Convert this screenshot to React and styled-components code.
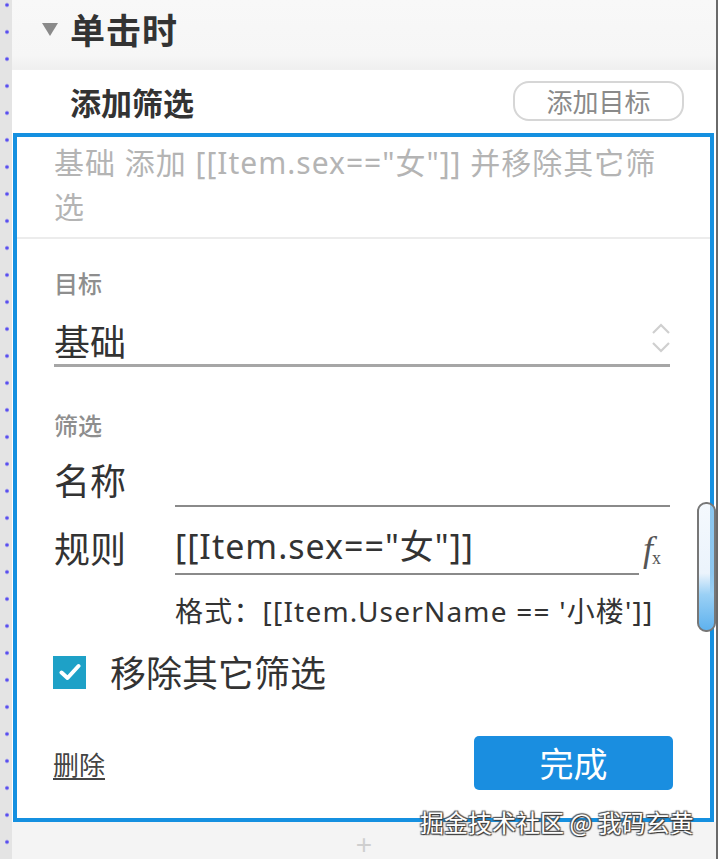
import React from "react";
import styled, { createGlobalStyle } from "styled-components";

const GlobalStyle = createGlobalStyle`
  html, body {
    margin: 0;
    padding: 0;
    background: #fff;
  }
  body {
    font-family: "Noto Sans", "Noto Sans CJK SC", sans-serif;
  }
`;

function Chevrons() {
  return (
    <svg width="22" height="36" viewBox="0 0 22 36" fill="none">
      <path d="M3 13 L11 5 L19 13" stroke="#cfcfcf" strokeWidth="2.2" />
      <path d="M3 23 L11 31 L19 23" stroke="#cfcfcf" strokeWidth="2.2" />
    </svg>
  );
}

function CheckMark() {
  return (
    <svg width="22" height="18" viewBox="0 0 22 18" fill="none">
      <path d="M2.5 9.5 L8.5 15 L19.5 3" stroke="#fff" strokeWidth="4" strokeLinecap="round" strokeLinejoin="round" />
    </svg>
  );
}

export default function App() {
  return (
    <>
      <GlobalStyle />
      <Page>
        <Strip />
        <Panel>
          <Header>
            <Caret />
            <HeaderTitle>单击时</HeaderTitle>
          </Header>
          <ActionRow>
            <ActionTitle>添加筛选</ActionTitle>
            <GhostButton>添加目标</GhostButton>
          </ActionRow>
          <FilterCard>
            <Summary>基础 添加 [[Item.sex=="女"]] 并移除其它筛选</Summary>
            <Form>
              <FieldLabel>目标</FieldLabel>
              <SelectBox>
                <span>基础</span>
                <Chevrons />
              </SelectBox>
              <FieldLabel $gap={43}>筛选</FieldLabel>
              <FieldRow $gap={15}>
                <RowLabel>名称</RowLabel>
                <TextInput />
              </FieldRow>
              <FieldRow $gap={16}>
                <RowLabel>规则</RowLabel>
                <TextInput>[[Item.sex=="女"]]</TextInput>
                <Fx>
                  <i>f</i>
                  <sub>x</sub>
                </Fx>
              </FieldRow>
              <Hint>格式：[[Item.UserName == '小楼']]</Hint>
              <CheckRow>
                <CheckBox>
                  <CheckMark />
                </CheckBox>
                <CheckText>移除其它筛选</CheckText>
              </CheckRow>
              <Footer>
                <DeleteLink>删除</DeleteLink>
                <PrimaryButton>完成</PrimaryButton>
              </Footer>
            </Form>
          </FilterCard>
          <AddBar>+</AddBar>
        </Panel>
        <ScrollThumb />
        <Watermark>掘金技术社区 @ 我码玄黄</Watermark>
      </Page>
    </>
  );
}

const Page = styled.div`
  position: relative;
  display: flex;
  width: 720px;
  height: 859px;
  overflow: hidden;
  background: #fff;
`;

const Strip = styled.div`
  width: 12px;
  flex-shrink: 0;
  background-color: #e4e4e4;
  background-image: radial-gradient(circle, #5a4ff0 1.4px, transparent 2.2px);
  background-size: 12px 27px;
  background-position: 1px -8.5px;
`;

const Panel = styled.div`
  width: 704px;
  display: flex;
  flex-direction: column;
  border-right: 2px solid #6a6a6a;
`;

const Header = styled.div`
  flex-shrink: 0;
  height: 69px;
  display: flex;
  align-items: center;
  padding-left: 30px;
  background: linear-gradient(to bottom, #f8f8f8 0%, #f6f6f6 80%, #efefef 100%);
  border-bottom: 1px solid #f0f0f0;
`;

const Caret = styled.div`
  width: 0;
  height: 0;
  border-left: 8px solid transparent;
  border-right: 8px solid transparent;
  border-top: 13px solid #8a8a8a;
  margin: -10px 12px 0 0;
`;

const HeaderTitle = styled.div`
  font-family: "Noto Sans CJK SC", sans-serif;
  font-size: 35px;
  font-weight: 700;
  color: #333;
  letter-spacing: 1px;
  margin-top: -12px;
`;

const ActionRow = styled.div`
  flex-shrink: 0;
  height: 63px;
  display: flex;
  align-items: center;
  justify-content: space-between;
  padding: 0 32px 0 58px;
`;

const ActionTitle = styled.div`
  font-family: "Noto Sans CJK SC", sans-serif;
  font-size: 31px;
  font-weight: 700;
  color: #333;
`;

const GhostButton = styled.button`
  width: 171px;
  height: 40px;
  border: 2px solid #d6d6d6;
  border-radius: 16px;
  background: #fff;
  color: #8a8a8a;
  font-family: "Noto Sans CJK SC", sans-serif;
  font-size: 26px;
  line-height: 1;
  padding: 0;
  margin-top: -2px;
`;

const FilterCard = styled.div`
  flex-shrink: 0;
  margin: 0 2px 0 1px;
  border: 4px solid #1590e0;
  background: #fff;
`;

const Summary = styled.div`
  padding: 4px 40px 8px 37px;
  font-family: "Noto Sans", "Noto Sans CJK SC", sans-serif;
  font-size: 30px;
  letter-spacing: 1px;
  line-height: 44px;
  color: #b4b4b4;
  border-bottom: 2px solid #ececec;
`;

const Form = styled.div`
  display: flex;
  flex-direction: column;
  padding: 0 40px 28px 37px;
`;

const FieldLabel = styled.div`
  margin-top: ${(p) => p.$gap ?? 29}px;
  font-family: "Noto Sans CJK SC", sans-serif;
  font-size: 24px;
  line-height: 30px;
  font-weight: 500;
  color: #8e8e8e;
`;

const SelectBox = styled.div`
  margin-top: 18px;
  height: 48px;
  display: flex;
  align-items: center;
  justify-content: space-between;
  border-bottom: 3px solid #a6a6a6;
  font-family: "Noto Sans CJK SC", sans-serif;
  font-size: 36px;
  color: #333;

  svg {
    margin-right: -2px;
    margin-top: -4px;
  }
`;

const FieldRow = styled.div`
  margin-top: ${(p) => p.$gap}px;
  height: 52px;
  display: flex;
  align-items: center;
`;

const RowLabel = styled.div`
  width: 121px;
  flex-shrink: 0;
  font-family: "Noto Sans CJK SC", sans-serif;
  font-size: 36px;
  color: #333;
  margin-top: -4px;
`;

const TextInput = styled.div`
  flex: 1;
  height: 50px;
  border-bottom: 2px solid #8a8a8a;
  font-family: "Noto Sans", "Noto Sans CJK SC", sans-serif;
  font-size: 34px;
  letter-spacing: 1px;
  line-height: 46px;
  color: #333;
  white-space: nowrap;
`;

const Fx = styled.div`
  width: 27px;
  margin-left: 4px;
  color: #555;
  font-family: "Liberation Serif", serif;
  line-height: 1;
  white-space: nowrap;

  i {
    font-size: 36px;
  }
  sub {
    font-size: 18px;
    vertical-align: -3px;
    margin-left: -1px;
  }
`;

const Hint = styled.div`
  margin-top: 18px;
  padding-left: 121px;
  font-family: "Noto Sans", "Noto Sans CJK SC", sans-serif;
  font-size: 28px;
  letter-spacing: 1.2px;
  line-height: 36px;
  color: #333;
  white-space: nowrap;
`;

const CheckRow = styled.div`
  margin-top: 26px;
  height: 34px;
  display: flex;
  align-items: center;
  gap: 24px;
`;

const CheckBox = styled.div`
  width: 33px;
  height: 33px;
  margin-left: -1px;
  background: #1ea1c7;
  display: flex;
  align-items: center;
  justify-content: center;
`;

const CheckText = styled.div`
  font-family: "Noto Sans CJK SC", sans-serif;
  font-size: 36px;
  color: #333;
  margin-top: -2px;
`;

const Footer = styled.div`
  margin-top: 47px;
  display: flex;
  align-items: center;
  justify-content: space-between;
`;

const DeleteLink = styled.a`
  font-family: "Noto Sans CJK SC", sans-serif;
  font-size: 26px;
  color: #444;
  text-decoration: underline;
  text-underline-offset: 3px;
  margin-left: -1px;
`;

const PrimaryButton = styled.button`
  width: 199px;
  height: 54px;
  margin-right: -3px;
  border: none;
  border-radius: 5px;
  background: #1a8ee0;
  color: #fff;
  font-family: "Noto Sans CJK SC", sans-serif;
  font-size: 34px;
  line-height: 1;
  padding: 0;
`;

const AddBar = styled.div`
  flex: 1;
  min-height: 0;
  padding-top: 11px;
  background: #f4f4f4;
  text-align: center;
  font-family: "Liberation Sans", sans-serif;
  font-size: 28px;
  line-height: 24px;
  color: #cfcfcf;
`;

const ScrollThumb = styled.div`
  position: absolute;
  left: 697px;
  top: 502px;
  width: 15px;
  height: 126px;
  border: 2px solid #777;
  border-radius: 9px;
  background: linear-gradient(
    to bottom,
    rgba(236, 244, 252, 0.55) 0%,
    rgba(222, 236, 250, 0.6) 55%,
    #9ad0f5 72%,
    #5fb2ee 100%
  );
`;

const Watermark = styled.div`
  position: absolute;
  left: 420px;
  top: 804px;
  font-family: "Noto Sans CJK SC", sans-serif;
  font-size: 24px;
  color: #fff;
  white-space: nowrap;
  text-shadow: 1px 1px 1px #333, -1px -1px 1px #555, 1px -1px 1px #555, -1px 1px 1px #555;
`;
